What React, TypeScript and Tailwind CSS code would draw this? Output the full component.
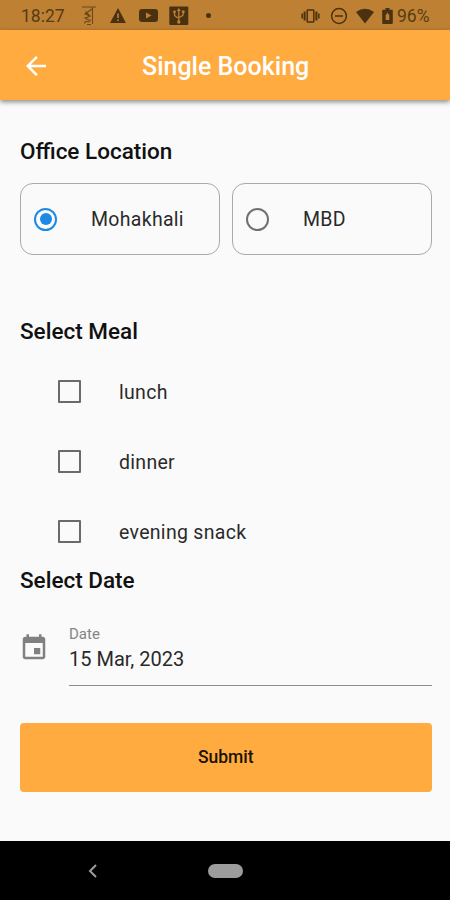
import React from "react";

const ink = "#4a3210";

function StatusBar() {
  return (
    <div className="flex h-[30px] shrink-0 items-center bg-[#be8033] pt-px pl-[21px] text-[#573b14]">
      <span className="w-[44px] pt-[2px] whitespace-nowrap text-[17.5px] leading-[27px]">18:27</span>
      <svg className="ml-[16px]" width="16" height="22" viewBox="0 0 16 22" fill="none" stroke="#6b4818" strokeWidth="1.1">
        <path d="M1 2h14M11.500 2v17M11 4L4 9l4.500 2M4.500 6.500l5 5M8.500 11.500L4 13l4 2M3.500 18.500q1-3 3-2t3-2M6 19.500h4" />
      </svg>
      <svg className="ml-[13px]" width="16" height="22" viewBox="0 0 16 22">
        <path d="M8 3l8 15H0z" fill={ink} />
        <path d="M7.200 8.500h1.600V13H7.200zM7.200 14.500h1.600v1.600H7.200z" fill="#be8033" />
      </svg>
      <svg className="ml-[13px]" width="19" height="22" viewBox="0 0 19 22">
        <rect y="4" width="19" height="13" rx="3" fill={ink} />
        <path d="M7 7.500l5.500 3-5.500 3z" fill="#be8033" />
      </svg>
      <svg className="ml-[11px]" width="20" height="22" viewBox="0 0 20 22" fill="none" stroke="#be8033" strokeWidth="1.300">
        <rect x=".3" y="1.500" width="19" height="18.500" rx="1" fill={ink} stroke="none" />
        <path d="M9.800 5v11.500M5.500 7v2.500q0 2 4.300 3.500M14.200 7v2q0 2-4.400 3.500" />
        <path d="M9.800 3l2 3h-4zM12.900 5.500h2.600v2.600h-2.600z" fill="#be8033" stroke="none" />
        <circle cx="5.500" cy="6.800" r="1.400" fill="#be8033" stroke="none" />
        <circle cx="9.800" cy="17" r="1.700" fill="#be8033" stroke="none" />
      </svg>
      <span className="ml-[17px] size-[5px] rounded-full bg-[#4a3210]" />
      <svg className="ml-[90px]" width="19" height="16" viewBox="0 0 19 16" fill="none" stroke={ink} strokeWidth="1.500">
        <rect x="6.200" y="2" width="6.600" height="12" rx=".6" />
        <path d="M3.600 3.500v9M15.400 3.500v9" strokeWidth="2" />
        <path d="M1.200 5.500v5M17.800 5.500v5" />
      </svg>
      <svg className="ml-[10px]" width="18" height="18" viewBox="0 0 18 18" fill="none" stroke={ink} strokeWidth="1.500">
        <circle cx="9" cy="9" r="7.400" />
        <path d="M5 9h8" />
      </svg>
      <svg className="ml-[8px]" width="18" height="16" viewBox="0 0 18 16">
        <path d="M0 4Q9-2.500 18 4L9 15.500z" fill={ink} />
      </svg>
      <svg className="ml-[8px]" width="11" height="18" viewBox="0 0 11 18">
        <path d="M3.500 1h4v1.800H10q.8 0 .8.8v12.600q0 .8-.8.8H1q-.8 0-.8-.8V3.600q0-.8.8-.8h2.500z" fill={ink} />
        <path d="M5.500 5.500L3.700 8.500V13h3.600V8.500z" fill="#be8033" />
      </svg>
      <span className="ml-[4px] pt-[2px] whitespace-nowrap text-[17.500px] leading-[27px]">96%</span>
    </div>
  );
}

function Office({ name, checked = false }: { name: string; checked?: boolean }) {
  return (
    <div
      role="radio"
      aria-checked={checked}
      className="flex h-[72px] w-[200px] items-center rounded-[13px] border border-[#a9a9a9] pl-[13px]"
    >
      <span
        className={`flex size-[23px] items-center justify-center rounded-full border-2 ${
          checked ? "border-[#1e88e5]" : "border-[#707070]"
        }`}
      >
        {checked && <span className="size-[12px] rounded-full bg-[#1e88e5]" />}
      </span>
      <span className="ml-[34px] pt-[2px] text-[19.500px] leading-[24px] tracking-[0.300px]">{name}</span>
    </div>
  );
}

function Meal({ name }: { name: string }) {
  return (
    <div role="checkbox" aria-checked={false} className="flex h-[70px] items-center pl-[38px]">
      <span className="size-[23px] rounded-[1px] border-2 border-[#6a6a6a]" />
      <span className="ml-[38px] pt-[3px] text-[19.500px] leading-[24px] tracking-[0.300px]">{name}</span>
    </div>
  );
}

function Heading({ children }: { children: React.ReactNode }) {
  return <h2 className="text-[22.500px] leading-[28px] font-medium text-[#111]">{children}</h2>;
}

export default function App() {
  return (
    <div className="flex h-[900px] w-[450px] flex-col overflow-hidden bg-[#fafafa] font-['Roboto','Noto_Sans',sans-serif] text-[#2a2a2a]">
      <StatusBar />
      <header className="flex h-[70px] shrink-0 items-center bg-[#ffab40] pt-[2px] pl-[21px] text-white shadow-[0_2px_5px_rgba(0,0,0,0.450)]">
        <svg width="30" height="30" viewBox="0 0 24 24" fill="currentColor">
          <path d="M20 11H7.830l5.590-5.590L12 4l-8 8 8 8 1.410-1.410L7.830 13H20v-2z" />
        </svg>
        <h1 className="ml-[91px] pt-[2px] text-[25px] leading-[30px] font-medium whitespace-nowrap">Single Booking</h1>
      </header>
      <main className="flex flex-1 flex-col pt-[37px] pr-[18px] pl-[20px]">
        <Heading>Office Location</Heading>
        <div className="mt-[18px] flex gap-[12px]">
          <Office name="Mohakhali" checked />
          <Office name="MBD" />
        </div>
        <div className="mt-[62px]">
          <Heading>Select Meal</Heading>
        </div>
        <div className="mt-[11px]">
          <Meal name="lunch" />
          <Meal name="dinner" />
          <Meal name="evening snack" />
        </div>
        <Heading>Select Date</Heading>
        <div className="mt-[27px] flex h-[65px]">
          <svg className="-ml-px mt-[12px]" width="30" height="30" viewBox="0 0 24 24" fill="#808080">
            <path d="M17 12h-5v5h5v-5zM16 1v2H8V1H6v2H5c-1.110 0-1.990.9-1.990 2L3 19c0 1.100.89 2 2 2h14c1.100 0 2-.9 2-2V5c0-1.100-.9-2-2-2h-1V1h-2zm3 18H5V8h14v11z" />
          </svg>
          <div className="ml-[20px] flex flex-1 flex-col border-b border-[#8c8c8c] pt-[4px]">
            <span className="text-[15px] leading-[18px] text-[#858585]">Date</span>
            <span className="mt-[4px] text-[20px] leading-[24px]">15 Mar, 2023</span>
          </div>
        </div>
        <button className="mt-[37px] -ml-[0.5px] h-[69px] w-[412.5px] rounded-[4px] bg-[#ffab40] text-[17.500px] font-medium text-[#1c1305]">
          Submit
        </button>
      </main>
      <nav className="flex h-[59px] shrink-0 items-center bg-black pl-[88px]">
        <svg width="10" height="14" viewBox="0 0 10 14" fill="none" stroke="#9c9c9c" strokeWidth="2">
          <path d="M8 1L2 7l6 6" />
        </svg>
        <span className="ml-[110px] h-[14px] w-[35px] rounded-full bg-[#9c9c9c]" />
      </nav>
    </div>
  );
}
